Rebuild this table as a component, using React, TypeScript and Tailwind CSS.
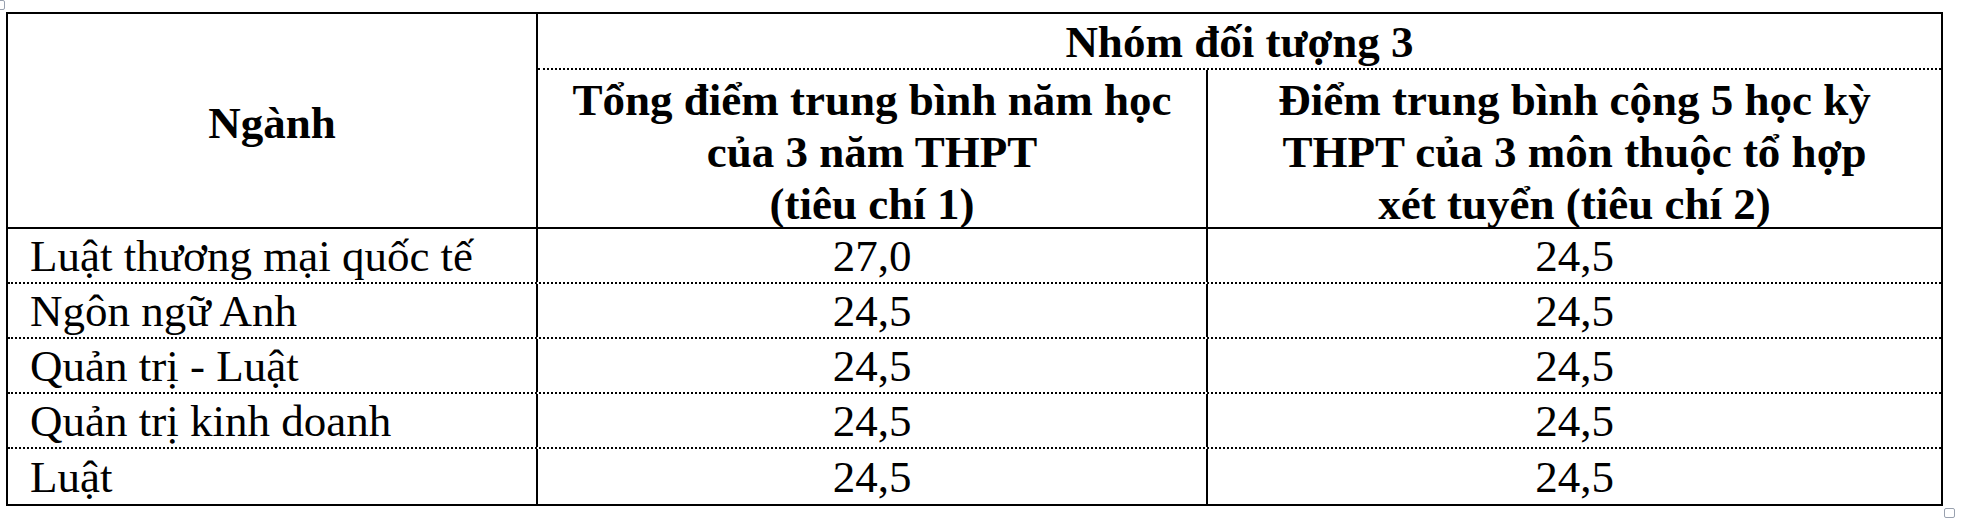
import React from 'react';

const rows = [
  { name: 'Luật thương mại quốc tế', c1: '27,0', c2: '24,5' },
  { name: 'Ngôn ngữ Anh', c1: '24,5', c2: '24,5' },
  { name: 'Quản trị - Luật', c1: '24,5', c2: '24,5' },
  { name: 'Quản trị kinh doanh', c1: '24,5', c2: '24,5' },
  { name: 'Luật', c1: '24,5', c2: '24,5' },
];

const App = () => {
  return (
    <div
      className="relative w-[1962px] h-[522px] bg-white text-black overflow-hidden"
      style={{ fontFamily: '"Liberation Serif", "Times New Roman", serif' }}
    >
      {/* Word table handles */}
      <div className="absolute left-[-5px] top-0 w-[10px] h-[10px] border border-gray-400 rounded-[2px]" />
      <div className="absolute left-[1944px] top-[508px] w-[11px] h-[10px] border border-gray-400 rounded-[2px]" />

      <div className="ml-[6px] pt-[12px]">
        <div className="w-[1937px] border-2 border-black box-border">
          {/* header */}
          <div className="flex border-b-2 border-black">
            <div className="w-[530px] shrink-0 border-r-2 border-black flex items-center justify-center font-bold text-[45px] leading-[52px] pt-[4px]">
              Ngành
            </div>
            <div className="flex-1 flex flex-col">
              <div className="h-[56px] border-b-2 border-dotted border-black flex items-center justify-center font-bold text-[45px] leading-[52px] pt-[2px]">
                Nhóm đối tượng 3
              </div>
              <div className="flex h-[157px]">
                <div className="w-[670px] shrink-0 border-r-2 border-black flex items-center justify-center text-center font-bold text-[45px] leading-[52px] pt-[6px]">
                  <span>
                    Tổng điểm trung bình năm học
                    <br />
                    của 3 năm THPT
                    <br />
                    (tiêu chí 1)
                  </span>
                </div>
                <div className="flex-1 flex items-center justify-center text-center font-bold text-[45px] leading-[52px] pt-[6px]">
                  <span>
                    Điểm trung bình cộng 5 học kỳ
                    <br />
                    THPT của 3 môn thuộc tổ hợp
                    <br />
                    xét tuyển (tiêu chí 2)
                  </span>
                </div>
              </div>
            </div>
          </div>

          {/* data rows */}
          {rows.map((r, i) => (
            <div
              key={i}
              className={`flex h-[55px] text-[45px] leading-[52px] ${
                i < rows.length - 1 ? 'border-b-2 border-dotted border-black' : ''
              }`}
            >
              <div className="w-[530px] shrink-0 border-r-2 border-black pl-[22px] flex items-center whitespace-nowrap">
                {r.name}
              </div>
              <div className="w-[670px] shrink-0 border-r-2 border-black flex items-center justify-center">
                {r.c1}
              </div>
              <div className="flex-1 flex items-center justify-center">{r.c2}</div>
            </div>
          ))}
        </div>
      </div>
    </div>
  );
};

export default App;
